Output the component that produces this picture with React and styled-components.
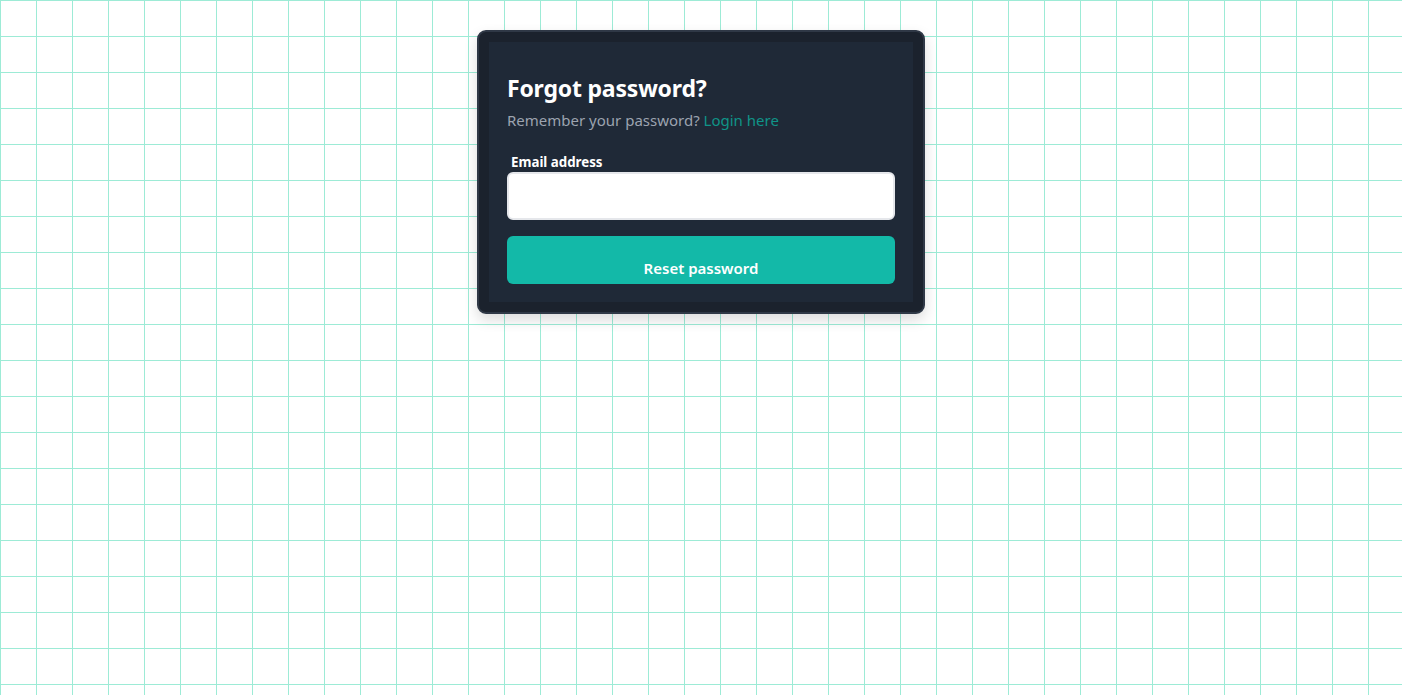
import React from "react";
import styled, { createGlobalStyle } from "styled-components";

const Global = createGlobalStyle`
  html, body { margin: 0; padding: 0; }
  body {
    min-height: 100vh;
    background-color: #ffffff;
    background-image:
      linear-gradient(to right, #9debd6 1px, transparent 1px),
      linear-gradient(to bottom, #9debd6 1px, transparent 1px);
    background-size: 36px 36px;
    font-family: "Noto Sans", "Open Sans", sans-serif;
  }
  * { box-sizing: border-box; }
`;

const Page = styled.main`
  display: flex;
  justify-content: center;
  padding-top: 30px;
`;

const Card = styled.div`
  width: 448px;
  padding: 10px;
  background: #1b222d;
  border: 2px solid #2f3846;
  border-radius: 9px;
  box-shadow: 0 6px 14px rgba(0, 0, 0, 0.14);
`;

const Panel = styled.div`
  background: #1f2937;
  padding: 30px 18px 18px 18px;
  display: flex;
  flex-direction: column;
`;

const Title = styled.h1`
  margin: 0;
  color: #ffffff;
  font-size: 23px;
  line-height: 32px;
  font-weight: 700;
  letter-spacing: -0.2px;
`;

const Subtitle = styled.p`
  margin: 4px 0 0 0;
  font-size: 15px;
  line-height: 24px;
  color: #9ca3af;
`;

const Link = styled.a`
  color: #0f9488;
  text-decoration: none;
`;

const Label = styled.label`
  margin: 21px 0 0 4px;
  color: #ffffff;
  font-size: 13.3px;
  line-height: 18px;
  font-weight: 700;
`;

const Input = styled.input`
  margin-top: 1px;
  height: 48px;
  width: 100%;
  background: #ffffff;
  border: 2px solid #e5e7eb;
  border-radius: 6px;
  padding: 0 12px;
  font-size: 16px;
  outline: none;
`;

const Button = styled.button`
  margin-top: 16px;
  height: 48px;
  width: 100%;
  background: #13b9a8;
  border: none;
  border-radius: 6px;
  color: #ffffff;
  font-family: inherit;
  font-size: 15px;
  font-weight: 600;
  padding-top: 16px;
  cursor: pointer;
`;

export default function App() {
  return (
    <>
      <Global />
      <Page>
        <Card>
          <Panel>
            <Title>Forgot password?</Title>
            <Subtitle>
              Remember your password? <Link href="#">Login here</Link>
            </Subtitle>
            <Label htmlFor="email">Email address</Label>
            <Input id="email" type="email" />
            <Button type="button">Reset password</Button>
          </Panel>
        </Card>
      </Page>
    </>
  );
}
